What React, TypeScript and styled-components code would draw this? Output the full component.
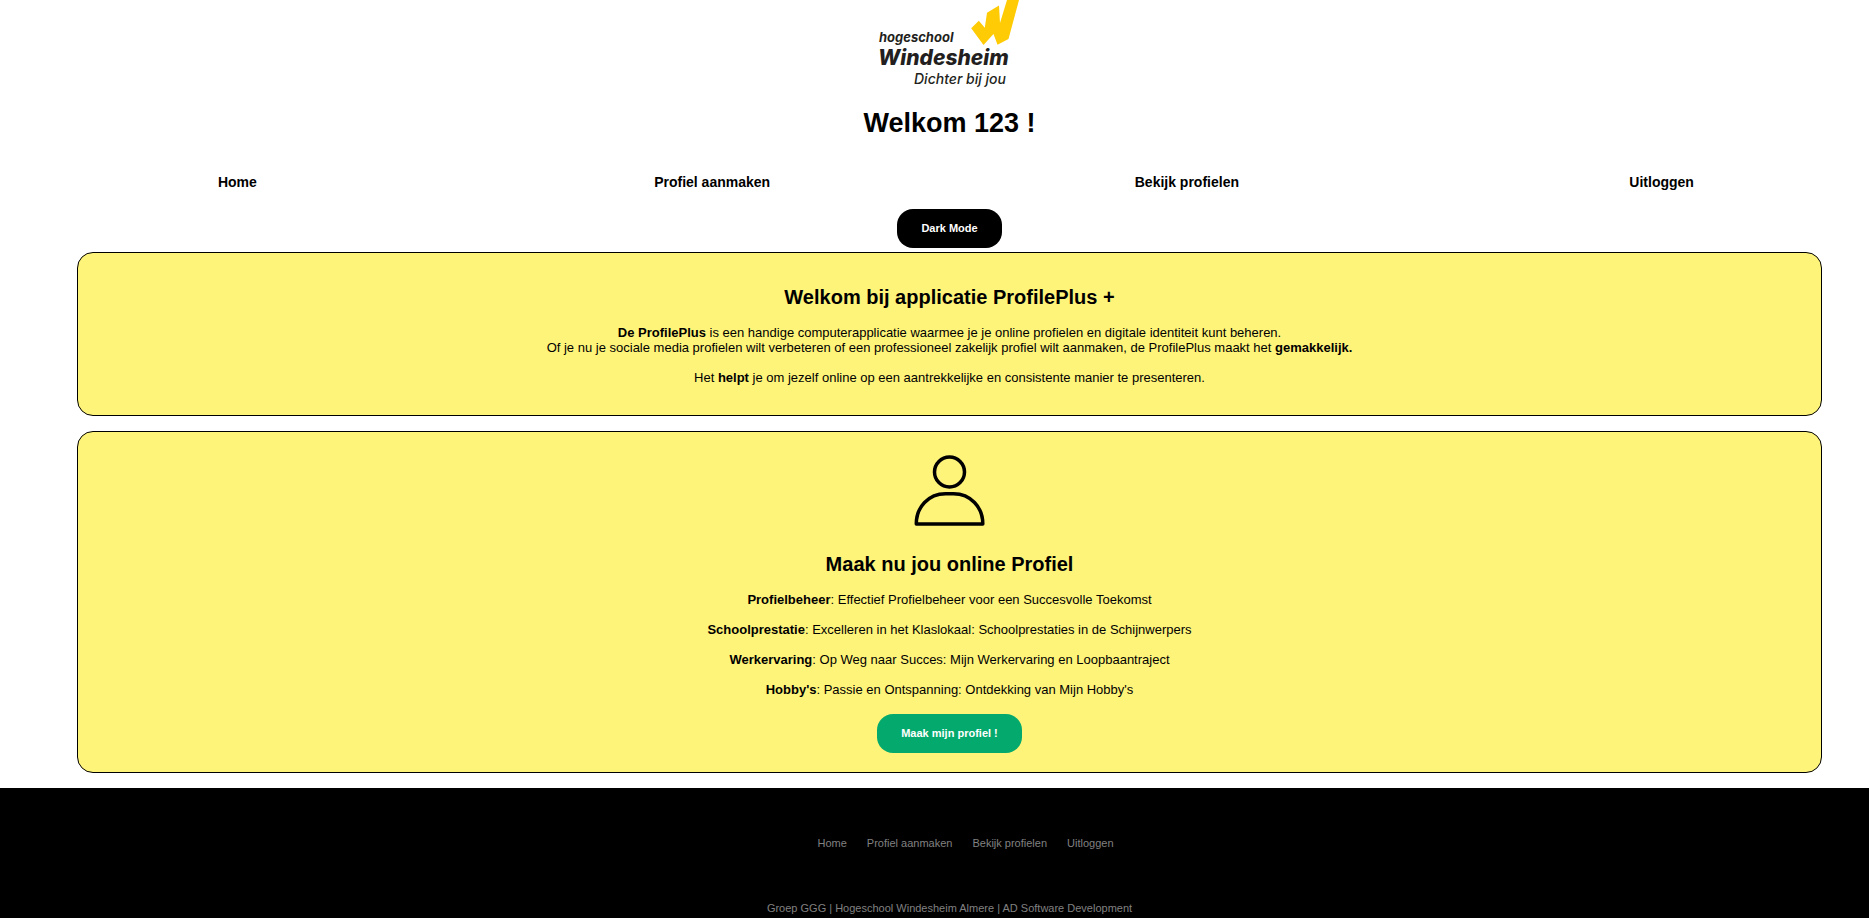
import React from "react";
import styled, { createGlobalStyle } from "styled-components";

const GlobalStyle = createGlobalStyle`
  * { box-sizing: border-box; }
  body {
    margin: 0;
    background: #fff;
    color: #000;
    font-family: Arial, "Liberation Sans", sans-serif;
    font-size: 13px;
    line-height: 15px;
  }
`;

const Viewport = styled.div`
  min-height: 100vh;
  overflow: hidden;
  display: flex;
`;

const Page = styled.div`
  flex: 1 0 calc(100% + 30px);
  display: flex;
  flex-direction: column;
`;

const Header = styled.header`
  display: flex;
  flex-direction: column;
  align-items: center;
`;

const Logo = styled.svg`
  display: block;
  width: 150px;
  height: 90px;
`;

const Title = styled.h1`
  margin: 18px 0 0;
  font-size: 27px;
  line-height: 30px;
`;

const Nav = styled.nav`
  display: grid;
  grid-template-columns: repeat(4, 1fr);
  align-self: stretch;
  margin: 36px 0 17px;
  text-align: center;
`;

const NavLink = styled.a`
  color: #000;
  font-size: 14px;
  line-height: 16px;
  font-weight: bold;
  text-decoration: none;
`;

const Button = styled.button<{ $primary?: boolean }>`
  margin: 2px 0 4px;
  padding: 12px 24px;
  border: 0;
  border-radius: 16px;
  background: ${(p) => (p.$primary ? "#04aa6d" : "#000")};
  color: #fff;
  font: bold 11px/15px Arial, "Liberation Sans", sans-serif;
  cursor: pointer;
`;

const Main = styled.main`
  display: flex;
  flex-direction: column;
  gap: 15px;
  margin: 0 77px 15px;
`;

const Card = styled.section`
  display: flex;
  flex-direction: column;
  align-items: center;
  padding: 16px 16px 15px;
  border: 1px solid #000;
  border-radius: 16px;
  background: #fff47a;
  text-align: center;
`;

const CardTitle = styled.h2`
  margin: 16px 0;
  font-size: 20px;
  line-height: 24px;
`;

const Text = styled.p`
  margin: 0 0 15px;
`;

const PersonIcon = styled.svg`
  display: block;
  width: 80px;
  height: 80px;
  margin-bottom: 8px;
`;

const Footer = styled.footer`
  flex: 1;
  padding: 48px 0 3px;
  background: #000;
  color: #808080;
  font-size: 11px;
  line-height: 14px;
  text-align: center;
`;

const FooterNav = styled.nav`
  display: flex;
  justify-content: center;
  gap: 20px;
  margin: 0 0 51px;
  padding-left: 32px;
`;

const FooterLink = styled.a`
  color: inherit;
  text-decoration: none;
`;

const links = ["Home", "Profiel aanmaken", "Bekijk profielen", "Uitloggen"];

const features = [
  ["Profielbeheer", "Effectief Profielbeheer voor een Succesvolle Toekomst"],
  ["Schoolprestatie", "Excelleren in het Klaslokaal: Schoolprestaties in de Schijnwerpers"],
  ["Werkervaring", "Op Weg naar Succes: Mijn Werkervaring en Loopbaantraject"],
  ["Hobby's", "Passie en Ontspanning: Ontdekking van Mijn Hobby's"],
];

export default function App() {
  return (
    <>
      <GlobalStyle />
      <Viewport>
        <Page>
          <Header>
            <Logo viewBox="0 0 150 90" role="img" aria-label="Hogeschool Windesheim">
              <path fill="#ffcb05" d="M96.200 28.300 103.800 20.700 109.800 27.700 112 12.700 124 5.500 125 23 132 0H144L133.500 39 122.500 44.700 118.500 34 108.500 45Z" />
              <g fill="#231f20" fontFamily="Inter, sans-serif" fontStyle="italic">
                <text x="4" y="42" fontSize="13" fontWeight="700">hogeschool</text>
                <text x="3" y="65" fontSize="21" fontWeight="800">Windesheim</text>
                <text x="39" y="84" fontSize="14" fontWeight="500">Dichter bij jou</text>
              </g>
            </Logo>
            <Title>Welkom 123 !</Title>
            <Nav>
              {links.map((l) => (
                <div key={l}><NavLink href="#">{l}</NavLink></div>
              ))}
            </Nav>
            <Button type="button">Dark Mode</Button>
          </Header>
          <Main>
            <Card>
              <CardTitle>Welkom bij applicatie ProfilePlus +</CardTitle>
              <Text>
                <b>De ProfilePlus</b> is een handige computerapplicatie waarmee je je online profielen en digitale identiteit kunt beheren.
                <br />
                Of je nu je sociale media profielen wilt verbeteren of een professioneel zakelijk profiel wilt aanmaken, de ProfilePlus maakt het <b>gemakkelijk.</b>
              </Text>
              <Text>
                Het <b>helpt</b> je om jezelf online op een aantrekkelijke en consistente manier te presenteren.
              </Text>
            </Card>
            <Card>
              <PersonIcon viewBox="0 0 80 80" fill="none" stroke="#000" strokeWidth="3.500" strokeLinejoin="round" aria-hidden="true">
                <circle cx="39.500" cy="24" r="15" />
                <path d="M6.300 76C6.300 59 18.500 45.700 35.500 45.700H43.500C60.500 45.700 72.800 59 72.800 76Z" />
              </PersonIcon>
              <CardTitle>Maak nu jou online Profiel</CardTitle>
              {features.map(([name, text]) => (
                <Text key={name}><b>{name}</b>: {text}</Text>
              ))}
              <Button type="button" $primary>Maak mijn profiel !</Button>
            </Card>
          </Main>
          <Footer>
            <FooterNav>
              {links.map((l) => (
                <FooterLink key={l} href="#">{l}</FooterLink>
              ))}
            </FooterNav>
            Groep GGG | Hogeschool Windesheim Almere | AD Software Development
          </Footer>
        </Page>
      </Viewport>
    </>
  );
}
